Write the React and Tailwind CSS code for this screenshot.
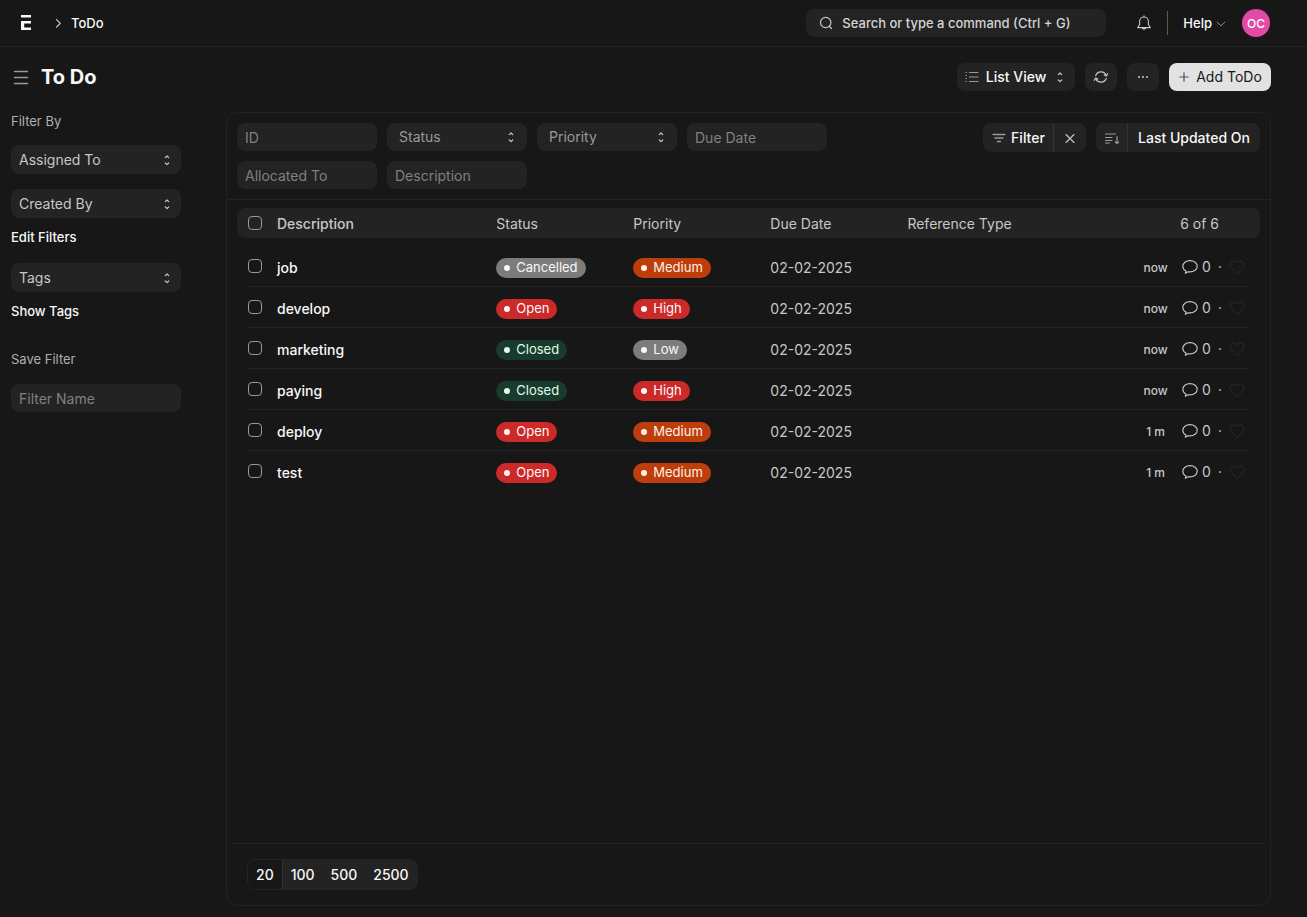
import { useState } from "react";

const todos = [
    { name: "job", status: "Cancelled", priority: "Medium", due: "02-02-2025", age: "now" },
    { name: "develop", status: "Open", priority: "High", due: "02-02-2025", age: "now" },
    { name: "marketing", status: "Closed", priority: "Low", due: "02-02-2025", age: "now" },
    { name: "paying", status: "Closed", priority: "High", due: "02-02-2025", age: "now" },
    { name: "deploy", status: "Open", priority: "Medium", due: "02-02-2025", age: "1 m" },
    { name: "test", status: "Open", priority: "Medium", due: "02-02-2025", age: "1 m" },
];

const pillColors = {
    Cancelled: "bg-[#7c7c7c] text-[#f8f8f8]",
    Low: "bg-[#7c7c7c] text-[#f8f8f8]",
    Open: "bg-[#cc2929] text-[#fff7f7]",
    High: "bg-[#cc2929] text-[#fff7f7]",
    Closed: "bg-[#173b2c] text-[#e4faeb]",
    Medium: "bg-[#bd3e0c] text-[#fff1e7]",
};

const rowGrid = "grid grid-cols-[29px_1.6fr_1fr_1fr_1fr_1fr_1.5fr] items-center";

function Icon({ size = 16, className = "", children }) {
    return (
        <svg
            width={size}
            height={size}
            viewBox="0 0 16 16"
            fill="none"
            stroke="currentColor"
            strokeLinecap="round"
            strokeLinejoin="round"
            className={`shrink-0 ${className}`}
            aria-hidden="true"
        >
            {children}
        </svg>
    );
}

function SelectIcon({ className = "" }) {
    return (
        <Icon className={className}>
            <path d="M6.300 5.600 8 4l1.700 1.600M6.300 11 8 12.600 9.700 11" strokeWidth="1.2" />
        </Icon>
    );
}

function Pill({ label }) {
    return (
        <span className={`flex h-5 w-fit items-center gap-1.5 rounded-full px-2 pb-px text-[13px] ${pillColors[label]}`}>
            <span className="size-1.5 rounded-full bg-current" />
            {label}
        </span>
    );
}

function Checkbox({ label }) {
    return (
        <input
            type="checkbox"
            aria-label={label}
            className="block size-3.5 appearance-none rounded border border-[#999] checked:bg-[#999]"
        />
    );
}

function SidebarDropdown({ label }) {
    return (
        <button className="flex h-[29px] w-full items-center justify-between rounded-lg bg-[#232323] pl-2 pr-1.5 text-sm text-[#c7c7c7]">
            {label}
            <SelectIcon />
        </button>
    );
}

function FilterInput({ label }) {
    return (
        <input
            type="text"
            aria-label={label}
            placeholder={label}
            className="h-7 w-[140px] rounded-lg bg-[#232323] px-2 text-sm text-[#c7c7c7] outline-none placeholder:text-[#808080]"
        />
    );
}

function FilterSelect({ label, options }) {
    return (
        <div className="relative">
            <select
                aria-label={label}
                className="h-7 w-[140px] appearance-none rounded-lg bg-[#232323] px-3 text-sm text-[#999] outline-none"
            >
                <option>{label}</option>
                {options.map((option) => (
                    <option key={option}>{option}</option>
                ))}
            </select>
            <SelectIcon className="pointer-events-none absolute right-2 top-1.5 text-[#c7c7c7]" />
        </div>
    );
}

function Navbar() {
    return (
        <header className="flex h-[47px] items-center justify-between border-b border-[#232323] pl-5 pr-[37px]">
            <nav className="flex items-center text-[13px] font-medium text-[#f8f8f8]">
                <a href="#" aria-label="Home">
                    <svg width="12" height="16" viewBox="0 0 12 16" fill="#f8f8f8" aria-hidden="true">
                        <path d="M1 0h10v2.500H1zM1 6h10v2.500H4.200v4H11V15H1z" />
                    </svg>
                </a>
                <Icon size={12} className="ml-5 mr-[7px] text-[#d4d4d4]">
                    <path d="m6 3.500 5 5-5 5" strokeWidth="1.6" />
                </Icon>
                <a href="#" className="pt-px">ToDo</a>
            </nav>
            <div className="flex items-center">
                <label className="flex h-7 w-[300px] items-center gap-2 rounded-lg bg-[#232323] pl-3 text-[#c7c7c7]">
                    <Icon>
                        <circle cx="7.7" cy="7.5" r="5.2" strokeWidth="1.2" />
                        <path d="m11.500 11.500 2 2" strokeWidth="1.2" />
                    </Icon>
                    <input
                        type="text"
                        aria-label="Search"
                        placeholder="Search or type a command (Ctrl + G)"
                        className="min-w-0 flex-1 bg-transparent pt-px text-[13px] font-medium outline-none placeholder:text-[#d4d4d4]"
                    />
                </label>
                <button aria-label="Notifications" className="ml-[30px] text-[#c7c7c7]">
                    <Icon>
                        <path d="M8 .8v1.200M3.600 9.500V6.400a4.400 4.400 0 0 1 8.800 0v3.100l1.900 3.100H1.700zM6.200 12.800a1.900 1.900 0 0 0 3.600 0" strokeWidth="1.1" />
                    </Icon>
                </button>
                <div className="ml-[15px] h-6 w-px bg-[#5a5a5a]" />
                <button className="ml-[15px] flex items-center gap-1 pt-px text-[13px] font-medium text-[#f8f8f8]">
                    Help
                    <Icon size={10} className="text-[#999]">
                        <path d="m2 5 6 6 6-6" strokeWidth="1.6" />
                    </Icon>
                </button>
                <button className="ml-4 size-7 rounded-full bg-[#e34aa6] pt-px text-xs font-medium text-white" aria-label="Account">
                    OC
                </button>
            </div>
        </header>
    );
}

function PageHead() {
    const button = "flex h-7 items-center justify-center rounded-lg bg-[#232323] text-[#c7c7c7]";
    return (
        <div className="flex h-[60px] items-center justify-between pl-[13px] pr-9">
            <div className="flex items-center gap-3">
                <button aria-label="Toggle sidebar" className="text-[#999]">
                    <Icon>
                        <path d="M1.500 2.500h13M1.500 8.500h13M1.500 14.500h13" strokeWidth="1.5" />
                    </Icon>
                </button>
                <h1 className="text-xl font-bold text-[#f8f8f8]">To Do</h1>
            </div>
            <div className="flex gap-2.5">
                <button className={`${button} w-[118px] gap-1.5 text-sm font-medium`}>
                    <Icon className="text-[#999]">
                        <path d="M5.500 3.500H14M5.500 8H14M5.500 12.500H14M2 3.500h.5M2 6.500h.5M2 9.500h.5M2 12.500h.5" strokeWidth="1.2" />
                    </Icon>
                    <span className="text-[#f8f8f8]">List View</span>
                    <SelectIcon />
                </button>
                <button className={`${button} w-8`} aria-label="Refresh">
                    <Icon>
                        <path d="M2.700 6.700a5.600 5.600 0 0 1 10.600-.2M13.300 9.300A5.600 5.600 0 0 1 2.700 9.500" strokeWidth="1.2" />
                        <path d="m14.700 4.700-1.300 2.200-2.200-1M1.300 11.300l1.300-2.200 2.200 1" strokeWidth="1.2" />
                    </Icon>
                </button>
                <button className={`${button} w-8`} aria-label="Menu">
                    <Icon>
                        <g fill="currentColor" stroke="none">
                            <circle cx="4" cy="8" r="1" />
                            <circle cx="8" cy="8" r="1" />
                            <circle cx="12" cy="8" r="1" />
                        </g>
                    </Icon>
                </button>
                <button className="flex h-7 w-[102px] items-center justify-center gap-1.5 rounded-lg bg-[#e2e2e2] text-sm text-[#171717]">
                    <Icon size={12} className="text-[#525252]">
                        <path d="M8 2.500v11M2.500 8h11" strokeWidth="1.6" />
                    </Icon>
                    Add ToDo
                </button>
            </div>
        </div>
    );
}

function Sidebar() {
    return (
        <aside className="w-[170px] shrink-0 text-[13px]">
            <h2 className="h-5 text-[#afafaf]">Filter By</h2>
            <div className="mt-[13px] space-y-[15px]">
                <SidebarDropdown label="Assigned To" />
                <SidebarDropdown label="Created By" />
            </div>
            <a href="#" className="mt-2.5 block h-5 font-medium text-[#f8f8f8]">Edit Filters</a>
            <div className="mt-[15px]">
                <SidebarDropdown label="Tags" />
            </div>
            <a href="#" className="mt-2.5 block h-5 font-medium text-[#f8f8f8]">Show Tags</a>
            <label htmlFor="filter-name" className="mt-7 block h-5 text-[#afafaf]">Save Filter</label>
            <input
                id="filter-name"
                type="text"
                placeholder="Filter Name"
                className="mt-3.5 h-7 w-full rounded-lg bg-[#232323] px-2 text-sm text-[#c7c7c7] outline-none placeholder:text-[#808080]"
            />
        </aside>
    );
}

function FilterBar() {
    return (
        <div className="flex items-start justify-between border-b border-[#232323] p-2.5">
            <div className="flex max-w-[600px] flex-wrap gap-2.5">
                <FilterInput label="ID" />
                <FilterSelect label="Status" options={["Open", "Closed", "Cancelled"]} />
                <FilterSelect label="Priority" options={["High", "Medium", "Low"]} />
                <FilterInput label="Due Date" />
                <FilterInput label="Allocated To" />
                <FilterInput label="Description" />
            </div>
            <div className="flex gap-2.5 text-sm font-medium text-[#f8f8f8]">
                <div className="flex h-[29px] overflow-hidden rounded-lg bg-[#232323]">
                    <button className="flex w-[71px] items-center justify-center gap-1 border-r border-[#343434]">
                        <Icon className="text-[#999]">
                            <path d="M2 4.500h12M4 8h8M6.500 11.500h3" strokeWidth="1.3" />
                        </Icon>
                        Filter
                    </button>
                    <button className="flex w-8 items-center justify-center" aria-label="Clear filters">
                        <Icon className="text-[#c7c7c7]">
                            <path d="m4 4.500 8 8M12 4.500l-8 8" strokeWidth="1.1" />
                        </Icon>
                    </button>
                </div>
                <div className="flex h-[29px] overflow-hidden rounded-lg bg-[#232323]">
                    <button className="flex w-8 items-center justify-center border-r border-[#343434]" aria-label="Sort order">
                        <Icon className="text-[#999]">
                            <path d="M1.500 4h10M1.500 7.500h6.500M1.500 10.500h6.500M1.500 13h4M13 6.500v7M11.300 12l1.700 1.700 1.700-1.700" strokeWidth="1.2" />
                        </Icon>
                    </button>
                    <button className="w-[132px]">Last Updated On</button>
                </div>
            </div>
        </div>
    );
}

function TodoTable() {
    return (
        <table className="mx-2.5 mt-2 block text-sm text-[#c7c7c7]">
            <thead className="block">
                <tr className={`${rowGrid} h-[30px] rounded-lg bg-[#232323] pl-[11px] pr-2.5 text-left`}>
                    <th className="font-normal"><Checkbox label="Select all" /></th>
                    <th className="pt-0.5 font-medium">Description</th>
                    <th className="pt-0.5 font-normal">Status</th>
                    <th className="pt-0.5 font-normal">Priority</th>
                    <th className="pt-0.5 font-normal">Due Date</th>
                    <th className="pt-0.5 font-normal">Reference Type</th>
                    <th className="pr-[31px] pt-0.5 text-right font-normal">6 of 6</th>
                </tr>
            </thead>
            <tbody className="ml-[11px] mr-2.5 mt-2 block">
                {todos.map((todo) => (
                    <tr key={todo.name} className={`${rowGrid} h-[41px] border-b border-[#232323] last:border-transparent`}>
                        <td><Checkbox label={`Select ${todo.name}`} /></td>
                        <td className="pt-1">
                            <a href="#" className="font-medium text-[#f8f8f8]">{todo.name}</a>
                        </td>
                        <td className="pt-1"><Pill label={todo.status} /></td>
                        <td className="pt-1"><Pill label={todo.priority} /></td>
                        <td className="pt-1">{todo.due}</td>
                        <td></td>
                        <td className="flex items-center pt-0.5">
                            <span className="ml-auto w-[25px] pt-0.5 text-center text-xs font-medium">{todo.age}</span>
                            <Icon className="ml-3.5">
                                <path d="M3.900 12.100C2 11 .8 9.300.8 7.300.8 4 4 1.600 8 1.600s7.200 2.400 7.200 5.600-3.200 5.700-7.200 5.700c-.7 0-1.400-.1-2.100-.2L3.300 14.300z" strokeWidth="1.1" />
                            </Icon>
                            <span className="ml-1">0</span>
                            <span className="ml-[7px]">·</span>
                            <button className="ml-[7px] mr-[5px] text-[#2b2b2b]" aria-label="Like">
                                <Icon>
                                    <path d="M8 14.500 1.900 8.400a3.800 3.800 0 0 1 0-5.300 3.800 3.800 0 0 1 5.300 0L8 3.900l.8-.8a3.800 3.800 0 0 1 5.300 0 3.800 3.800 0 0 1 0 5.300z" />
                                </Icon>
                            </button>
                        </td>
                    </tr>
                ))}
            </tbody>
        </table>
    );
}

function Paging() {
    const [pageSize, setPageSize] = useState(20);
    return (
        <div className="mx-[5px] mt-auto border-t border-[#232323] px-[15px] py-[15px]">
            <div className="flex h-[31px] w-fit overflow-hidden rounded-lg border border-[#232323] bg-[#232323] text-sm font-medium text-[#f8f8f8]">
                {[20, 100, 500, 2500].map((size) => (
                    <button
                        key={size}
                        className={size === pageSize ? "border-r border-[#343434] bg-[#171717] px-2" : "px-2"}
                        onClick={() => setPageSize(size)}
                    >
                        {size}
                    </button>
                ))}
            </div>
        </div>
    );
}

export default function App() {
    return (
        <div className="flex min-h-screen flex-col bg-[#171717] font-['Inter',sans-serif] text-[#c7c7c7]">
            <Navbar />
            <PageHead />
            <div className="flex flex-1 gap-[45px] pb-[11px] pl-[11px] pr-9 pt-[5px]">
                <Sidebar />
                <main className="flex min-w-0 flex-1 flex-col rounded-xl border border-[#232323]">
                    <FilterBar />
                    <TodoTable />
                    <Paging />
                </main>
            </div>
        </div>
    );
}
